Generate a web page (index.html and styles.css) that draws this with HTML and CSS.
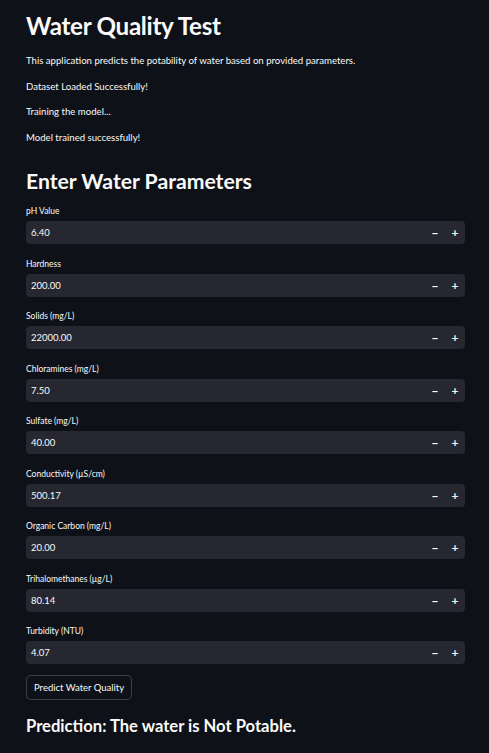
FILE: index.html
```html
<!DOCTYPE html>
<html>
<head>
<meta charset="utf-8">
<link rel="stylesheet" href="styles.css">
</head>
<body>
<main class="page">
  <h1 class="title">Water Quality Test</h1>
  <p class="text">This application predicts the potability of water based on provided parameters.</p>
  <p class="text">Dataset Loaded Successfully!</p>
  <p class="text">Training the model...</p>
  <p class="text">Model trained successfully!</p>
  <h2 class="subtitle">Enter Water Parameters</h2>
  <div class="fields">
    <div class="field"><label class="label">pH Value</label><div class="input"><span class="value">6.40</span><span class="step">&minus;</span><span class="step">+</span></div></div>
    <div class="field"><label class="label">Hardness</label><div class="input"><span class="value">200.00</span><span class="step">&minus;</span><span class="step">+</span></div></div>
    <div class="field"><label class="label">Solids (mg/L)</label><div class="input"><span class="value">22000.00</span><span class="step">&minus;</span><span class="step">+</span></div></div>
    <div class="field"><label class="label">Chloramines (mg/L)</label><div class="input"><span class="value">7.50</span><span class="step">&minus;</span><span class="step">+</span></div></div>
    <div class="field"><label class="label">Sulfate (mg/L)</label><div class="input"><span class="value">40.00</span><span class="step">&minus;</span><span class="step">+</span></div></div>
    <div class="field"><label class="label">Conductivity (µS/cm)</label><div class="input"><span class="value">500.17</span><span class="step">&minus;</span><span class="step">+</span></div></div>
    <div class="field"><label class="label">Organic Carbon (mg/L)</label><div class="input"><span class="value">20.00</span><span class="step">&minus;</span><span class="step">+</span></div></div>
    <div class="field"><label class="label">Trihalomethanes (µg/L)</label><div class="input"><span class="value">80.14</span><span class="step">&minus;</span><span class="step">+</span></div></div>
    <div class="field"><label class="label">Turbidity (NTU)</label><div class="input"><span class="value">4.07</span><span class="step">&minus;</span><span class="step">+</span></div></div>
  </div>
  <button class="button">Predict Water Quality</button>
  <h3 class="result">Prediction: The water is Not Potable.</h3>
</main>
</body>
</html>
```
FILE: styles.css
```css
html, body {
  margin: 0;
  padding: 0;
  background: #0e1117;
  color: #fafafa;
  font-family: Lato, "Liberation Sans", sans-serif;
}
.page {
  padding: 10px 24px 0 26px;
  display: flex;
  flex-direction: column;
}
.title {
  margin: 0;
  font-size: 24.2px;
  font-weight: 700;
  line-height: 32px;
  height: 32px;
  letter-spacing: -0.3px;
}
.text {
  margin: 0;
  font-size: 9.6px;
  line-height: 16px;
  height: 16px;
  margin-top: 9.7px;
}
.text:first-of-type { margin-top: 11px; }
.subtitle {
  margin: 22px 0 0 0;
  font-size: 21.2px;
  font-weight: 700;
  line-height: 26px;
}
.fields {
  display: flex;
  flex-direction: column;
  gap: 12.5px;
  margin-top: 10px;
}
.field {
  display: flex;
  flex-direction: column;
  gap: 3px;
}
.label {
  font-size: 8.5px;
  line-height: 14px;
  height: 14px;
  display: flex;
  align-items: center;
}
.input {
  height: 23px;
  background: #262730;
  border-radius: 4px;
  display: flex;
  align-items: center;
  padding-left: 5px;
}
.value {
  flex: 1;
  font-size: 9.5px;
}
.step {
  width: 20px;
  text-align: center;
  font-size: 12px;
  font-weight: 700;
}
.button {
  align-self: flex-start;
  margin-top: 11px;
  height: 25px;
  padding: 0 7px;
  background: #0e1117;
  color: #fafafa;
  border: 1px solid rgba(250,250,250,0.2);
  border-radius: 5px;
  font-family: inherit;
  font-size: 9.5px;
}
.result {
  margin: 15px 0 0 0;
  font-size: 16.6px;
  font-weight: 700;
  line-height: 22px;
}
```
